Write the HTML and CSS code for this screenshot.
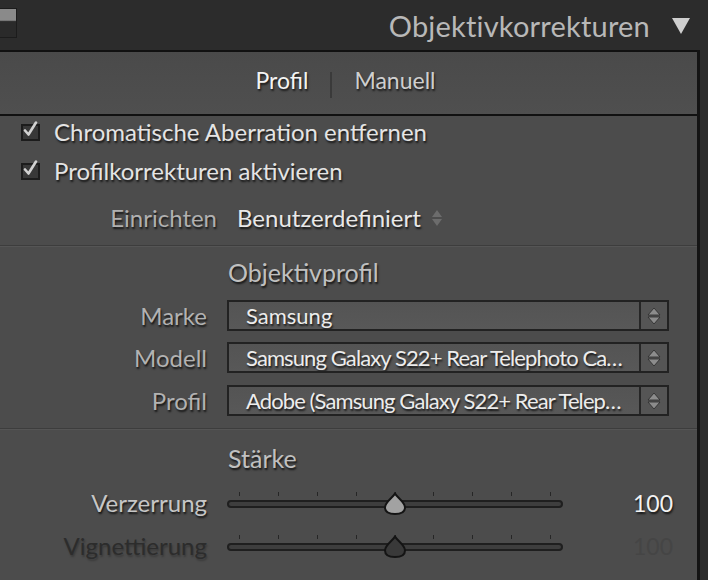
FILE: index.html
```html
<!DOCTYPE html>
<html lang="de">
<head>
    <meta charset="UTF-8">
    <title>Objektivkorrekturen</title>
    <link rel="stylesheet" href="styles.css">
</head>
<body>
    <div id="panel-header">
        <span class="switch"></span>
        <span class="title">Objektivkorrekturen</span>
        <svg class="arrow" width="22" height="20" viewBox="0 0 22 20"><path d="M2 2 H20 L11 18 Z" fill="#cfcfcf"/></svg>
    </div>

    <div id="panel">
        <!-- Tabs -->
        <div class="tabs">
            <span class="tab active">Profil</span>
            <span class="tab-sep"></span>
            <span class="tab">Manuell</span>
        </div>

        <div class="section">
            <label class="check-row">
                <span class="box"><svg width="20" height="20" viewBox="0 0 20 20"><path d="M3 9.5 L6.5 13.5 L14 1.5" fill="none" stroke="#d2d2d2" stroke-width="2.6" stroke-linecap="round" stroke-linejoin="round"/></svg></span>
                Chromatische Aberration entfernen
            </label>
            <label class="check-row">
                <span class="box"><svg width="20" height="20" viewBox="0 0 20 20"><path d="M3 9.5 L6.5 13.5 L14 1.5" fill="none" stroke="#d2d2d2" stroke-width="2.6" stroke-linecap="round" stroke-linejoin="round"/></svg></span>
                Profilkorrekturen aktivieren
            </label>
            <div class="setup-row">
                <span class="setup-label">Einrichten</span>
                <span class="value">Benutzerdefiniert</span>
                <svg class="updown" width="12" height="20" viewBox="0 0 12 20"><path d="M6 2 L11 9 H1 Z M6 18 L11 11 H1 Z" fill="#6c6c6c"/></svg>
            </div>
        </div>

        <!-- Objektivprofil -->
        <div class="section">
            <div class="group-title">Objektivprofil</div>
            <div class="field-row">
                <span class="label">Marke</span>
                <div class="select"><span class="select-text">Samsung</span><span class="select-btn"><svg width="16" height="22" viewBox="0 0 16 22"><path d="M8 3 L14 10 H2 Z M8 19 L14 12 H2 Z" fill="#8c8c8c" stroke="#2a2a2a" stroke-width="0.8"/></svg></span></div>
            </div>
            <div class="field-row">
                <span class="label">Modell</span>
                <div class="select"><span class="select-text tight">Samsung Galaxy S22+ Rear Telephoto Ca…</span><span class="select-btn"><svg width="16" height="22" viewBox="0 0 16 22"><path d="M8 3 L14 10 H2 Z M8 19 L14 12 H2 Z" fill="#8c8c8c" stroke="#2a2a2a" stroke-width="0.8"/></svg></span></div>
            </div>
            <div class="field-row">
                <span class="label">Profil</span>
                <div class="select"><span class="select-text tight">Adobe (Samsung Galaxy S22+ Rear Telep…</span><span class="select-btn"><svg width="16" height="22" viewBox="0 0 16 22"><path d="M8 3 L14 10 H2 Z M8 19 L14 12 H2 Z" fill="#8c8c8c" stroke="#2a2a2a" stroke-width="0.8"/></svg></span></div>
            </div>
        </div>

        <!-- Stärke -->
        <div class="section last">
            <div class="group-title">Stärke</div>
            <div class="slider-row">
                <span class="label">Verzerrung</span>
                <div class="slider">
                    <div class="ticks"><i></i><i></i><i></i><i></i><i></i><i></i><i></i><i></i><i></i></div>
                    <div class="track"></div>
                    <svg class="thumb" width="24" height="24" viewBox="0 0 24 24"><path d="M12 1.5 C14 5.5 22 10 22 15.5 C22 20 18.5 22 12 22 C5.5 22 2 20 2 15.5 C2 10 10 5.5 12 1.5 Z" fill="#a2a2a2" stroke="#141414" stroke-width="2"/></svg>
                </div>
                <span class="num">100</span>
            </div>
            <div class="slider-row disabled">
                <span class="label">Vignettierung</span>
                <div class="slider">
                    <div class="ticks"><i></i><i></i><i></i><i></i><i></i><i></i><i></i><i></i><i></i></div>
                    <div class="track"></div>
                    <svg class="thumb" width="24" height="24" viewBox="0 0 24 24"><path d="M12 1.5 C14 5.5 22 10 22 15.5 C22 20 18.5 22 12 22 C5.5 22 2 20 2 15.5 C2 10 10 5.5 12 1.5 Z" fill="#393939" stroke="#141414" stroke-width="2"/></svg>
                </div>
                <span class="num">100</span>
            </div>
        </div>
    </div>
</body>
</html>
```

FILE: styles.css
```css
body {
    margin: 0;
    background: #2c2c2c;
    font-family: Lato, "Open Sans", sans-serif;
    color: #dcdcdc;
    overflow: hidden;
}
#panel-header {
    height: 50px;
    display: flex;
    align-items: center;
    justify-content: flex-end;
    position: relative;
    padding-right: 16px;
}
.switch {
    position: absolute;
    left: 0;
    top: 8px;
    width: 16px;
    height: 28px;
    background: linear-gradient(#8a8a8a 0, #8a8a8a 40%, #2a2a2a 45%);
    border: 1px solid #1c1c1c;
    border-left: none;
}
.title {
    font-size: 29px;
    color: #b8b8b8;
    letter-spacing: 0.2px;
}
.arrow {
    margin-left: 20px;
    margin-top: 1px;
}
#panel {
    width: 697px;
    height: 530px;
    border-right: 3px solid #141414;
    background: #4c4c4c;
}
.tabs {
    height: 62px;
    border-top: 2px solid #111;
    border-bottom: 2px solid #111;
    background: linear-gradient(#4a4a4a, #4f4f4f);
    display: flex;
    align-items: center;
    justify-content: center;
    gap: 22px;
    padding-right: 6px;
    font-size: 23px;
    text-shadow: 1px 2px 2px rgba(0, 0, 0, 0.7);
}
.tab {
    color: #cfcfcf;
    margin-bottom: 6px;
}
.tab.active {
    color: #f4f4f4;
}
.tab-sep {
    width: 2px;
    height: 26px;
    background: #3a3a3a;
    margin-top: 4px;
}
.section {
    border-bottom: 1px solid #3d3d3d;
    box-shadow: 0 1px 0 #555;
}
.section.last {
    border-bottom: none;
    box-shadow: none;
}
.check-row {
    display: flex;
    align-items: center;
    height: 30px;
    padding-left: 21px;
    font-size: 24px;
    color: #e4e4e4;
    text-shadow: 1px 2px 2px rgba(0, 0, 0, 0.75);
}
.check-row + .check-row {
    margin-top: 9px;
}
.box {
    position: relative;
    width: 15px;
    height: 13px;
    border: 2px solid #1c1c1c;
    background: #383838;
    margin-right: 14px;
    margin-top: 2px;
    flex-shrink: 0;
}
.box svg {
    position: absolute;
    left: -1px;
    top: -5px;
}
.setup-row {
    display: flex;
    align-items: center;
    height: 60px;
    padding-top: 4px;
    box-sizing: border-box;
    font-size: 24px;
    text-shadow: 1px 2px 2px rgba(0, 0, 0, 0.75);
}
.setup-label {
    width: 217px;
    text-align: right;
    color: #b0b0b0;
    margin-right: 20px;
}
.value {
    color: #e8e8e8;
}
.updown {
    margin-left: 10px;
    margin-top: 2px;
}
.group-title {
    height: 54px;
    padding-left: 228px;
    padding-top: 12px;
    box-sizing: border-box;
    font-size: 25px;
    line-height: 28px;
    color: #c0c0c0;
    text-shadow: 1px 2px 2px rgba(0, 0, 0, 0.75);
}
.section.last .group-title {
    height: 52px;
    padding-top: 15px;
}
.field-row {
    display: flex;
    align-items: flex-start;
    height: 43px;
    font-size: 24px;
    line-height: 31px;
    text-shadow: 1px 2px 2px rgba(0, 0, 0, 0.75);
}
.field-row:nth-child(2) {
    height: 42px;
}
.label {
    width: 207px;
    text-align: right;
    color: #b2b2b2;
    margin-right: 20px;
    flex-shrink: 0;
}
.select {
    width: 438px;
    height: 27px;
    display: flex;
    border: 2px solid #222;
    background: linear-gradient(#545454, #585858);
}
.select-text {
    flex: 1;
    padding-left: 17px;
    color: #ececec;
    font-size: 22px;
    line-height: 27px;
    white-space: nowrap;
    overflow: hidden;
}
.select-text.tight {
    letter-spacing: -0.9px;
}
.select-btn {
    width: 26px;
    border-left: 2px solid #262626;
    display: flex;
    align-items: center;
    justify-content: center;
    background: #555;
}
.slider-row {
    display: flex;
    align-items: center;
    height: 43px;
    font-size: 24px;
    text-shadow: 1px 2px 2px rgba(0, 0, 0, 0.75);
}
.slider-row .label {
    color: #c6c6c6;
}
.slider {
    position: relative;
    width: 336px;
    height: 28px;
}
.ticks {
    position: absolute;
    left: 12px;
    right: 12px;
    top: 3px;
    display: flex;
    justify-content: space-between;
}
.ticks i {
    width: 1px;
    height: 4px;
    background: #262626;
}
.track {
    position: absolute;
    left: 0;
    right: 0;
    top: 11px;
    height: 4px;
    border: 2px solid #1f1f1f;
    border-radius: 5px;
    background: #3e3e3e;
}
.thumb {
    position: absolute;
    left: 156px;
    top: 3px;
}
.num {
    width: 110px;
    text-align: right;
    font-size: 23px;
    color: #f2f2f2;
}
.disabled .label {
    color: #2c2c2c;
    text-shadow: 1px 2px 2px rgba(0, 0, 0, 0.25);
}
.disabled .num {
    color: #454545;
    text-shadow: none;
}
```
